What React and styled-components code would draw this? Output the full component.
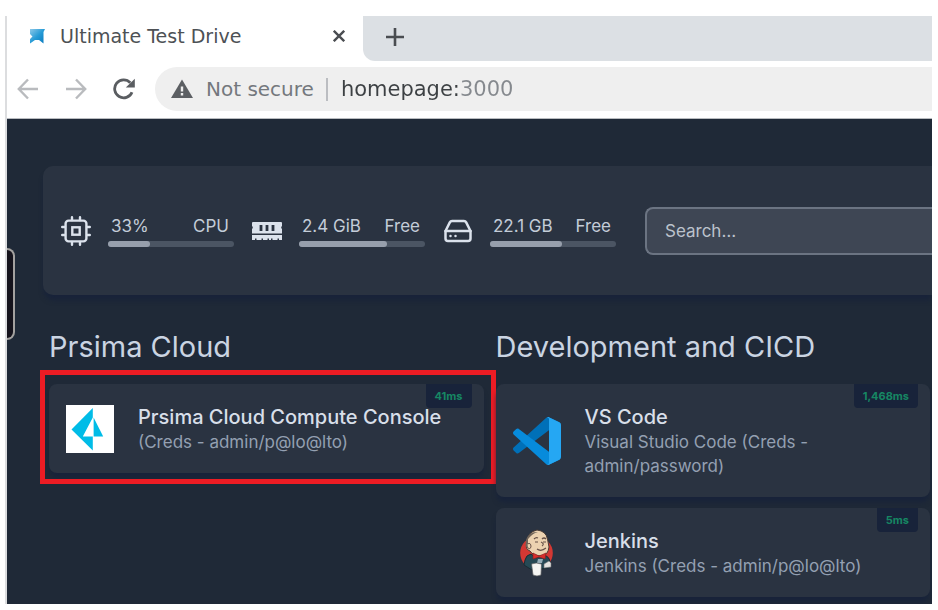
import React from "react";
import styled, { createGlobalStyle } from "styled-components";
import { FiHardDrive } from "react-icons/fi";

const GlobalStyle = createGlobalStyle`
  *, *::before, *::after { box-sizing: border-box; }
  body { margin: 0; background: #fff; }
  button, input { font: inherit; border: 0; outline: 0; padding: 0; background: none; }
  h1, h2, h3, p, ul { margin: 0; padding: 0; font-weight: inherit; font-size: inherit; }
  ul { list-style: none; }
`;

const Frame = styled.div`
  padding: 16px 6px 6px 5px;
`;

const Browser = styled.div`
  position: relative;
  overflow: hidden;
  border-left: 2px solid #dcdddf;
  font-family: "DejaVu Sans", sans-serif;
`;

const TabStrip = styled.div`
  display: flex;
  height: 45px;
  background: #fff;
`;

const Tab = styled.div`
  display: flex;
  align-items: center;
  flex: 0 0 356px;
  padding: 0 14px 6px 21px;
  color: #4d5155;
  font-size: 19px;
`;

const TabTitle = styled.span`
  flex: 1;
  margin-left: 14px;
  white-space: nowrap;
`;

const StripRest = styled.div`
  flex: 1;
  display: flex;
  padding: 0 0 4px 18px;
  background: #dce0e4;
  border-bottom-left-radius: 12px;
`;

const IconButton = styled.button`
  display: grid;
  place-items: center;
  flex: 0 0 auto;
  width: ${(p) => p.$size || 28}px;
  color: ${(p) => p.$color || "#4a4d51"};
  cursor: pointer;
`;

const Toolbar = styled.div`
  display: flex;
  align-items: center;
  height: 58px;
  padding: 0 0 1px 7px;
  border-bottom: 1px solid #b9bcc0;
`;

const NavButtons = styled.div`
  display: flex;
  gap: 20px;
  margin-right: 17px;
`;

const AddressBar = styled.div`
  flex: 1;
  min-width: 0;
  display: flex;
  align-items: center;
  height: 44px;
  padding-left: 16px;
  border-radius: 22px 0 0 22px;
  background: #efefef;
  color: #74787d;
  font-size: 20px;
`;

const Security = styled.button`
  display: flex;
  align-items: center;
  gap: 13px;
  color: inherit;
  white-space: nowrap;
`;

const Divider = styled.span`
  width: 2px;
  height: 23px;
  margin: 0 13px 0 12px;
  background: #bbbdc1;
`;

const UrlInput = styled.input`
  flex: 1;
  min-width: 0;
  height: 32px;
  font-size: 21px;
  color: transparent;
  caret-color: #3c4043;
  background: linear-gradient(90deg, #3c4043 118px, #85898e 118px);
  -webkit-background-clip: text;
  background-clip: text;
`;

const Dashboard = styled.main`
  padding: 47px 0 7px 36px;
  background: #1f2937;
  color: #cbd5e1;
  font-family: Inter, sans-serif;
`;

const SideHandle = styled.div`
  position: absolute;
  left: 0;
  top: 232px;
  width: 8px;
  height: 92px;
  border: 2px solid #a3a19f;
  border-left: 0;
  border-radius: 0 9px 9px 0;
  background: #15131c;
`;

const InfoPanel = styled.section`
  display: flex;
  align-items: center;
  height: 129px;
  padding-left: 18px;
  border-radius: 10px 0 0 10px;
  background: #2a3341;
  box-shadow: 0 6px 5px -1px #18233a;
`;

const Resource = styled.div`
  display: flex;
  align-items: center;
  flex: 0 0 173px;
  margin-right: 18px;
  gap: 17px;
  color: #dbe2ec;
`;

const Meter = styled.div`
  flex: 1;
`;

const MeterLabels = styled.div`
  display: flex;
  justify-content: space-between;
  padding: 0 5px 0 3px;
  margin-bottom: 3px;
  color: #c3ccd8;
  font-size: 17px;
  line-height: 24px;
  white-space: nowrap;
`;

const Track = styled.div`
  height: 6px;
  border-radius: 3px;
  background: #4b5563;
`;

const Fill = styled.div`
  height: 6px;
  border-radius: 3px;
  background: #979fac;
`;

const SearchInput = styled.input`
  flex: 1;
  min-width: 0;
  height: 48px;
  margin-left: 11px;
  padding-left: 18px;
  border: 2px solid #6b7482;
  border-right: 0;
  border-radius: 8px 0 0 8px;
  background: #3e4654;
  color: #d1d5db;
  font-size: 17px;
  &::placeholder { color: #bcc2cc; opacity: 1; }
`;

const Groups = styled.div`
  display: grid;
  grid-template-columns: 1fr 1fr;
  gap: 12px;
  padding: 34px 2px 0 6px;
`;

const GroupTitle = styled.h2`
  margin-bottom: 19px;
  color: #cad4e2;
  font-size: 29px;
  line-height: 36px;
  white-space: nowrap;
`;

const CardList = styled.ul`
  display: grid;
  gap: 11px;
`;

const CardItem = styled.li`
  position: relative;
`;

const Highlight = styled.div`
  position: absolute;
  inset: -14px -12px -11px -9px;
  border: 5px solid #ec1c24;
  pointer-events: none;
`;

const Card = styled.a`
  display: flex;
  align-items: center;
  gap: 24px;
  padding: 20px 16px 19px 17px;
  border-radius: 8px;
  background: #2a3341;
  box-shadow: 0 6px 5px -1px #18233a;
  color: inherit;
  text-decoration: none;
  svg { flex: 0 0 auto; }
`;

const CardTitle = styled.h3`
  color: #d8dfe9;
  font-size: 20px;
  font-weight: 500;
  line-height: 26px;
`;

const CardText = styled.p`
  color: #94a0b2;
  font-size: 17px;
  line-height: 24px;
`;

const Badge = styled.span`
  position: absolute;
  top: 0;
  right: 12px;
  padding: 0 9px;
  border-radius: 0 0 4px 4px;
  background: #18233a;
  color: #168763;
  font-size: 11px;
  font-weight: 700;
  line-height: 24px;
`;

const PageIcon = () => (
  <svg width="18" height="18" viewBox="0 0 18 18" aria-hidden="true">
    <defs>
      <linearGradient id="flag" x1="0" y1="0" x2="1" y2="1">
        <stop offset="0" stopColor="#8dc8e8" />
        <stop offset=".5" stopColor="#269bd6" />
        <stop offset="1" stopColor="#0878bd" />
      </linearGradient>
    </defs>
    <path d="M2 2H17L15.5 5V16.5L11 13L7 13L2 16.5V12L4.5 9.5L2 7Z" fill="url(#flag)" />
  </svg>
);

const Arrow = ({ back }) => (
  <svg width="22" height="22" viewBox="0 0 22 22" fill="none" stroke="currentColor" strokeWidth="2.4" aria-hidden="true">
    <path d={back ? "M21 11H2M11 1.5L1.8 11L11 20.5" : "M1 11H20M11 1.5L20.2 11L11 20.5"} />
  </svg>
);

const Reload = () => (
  <svg width="22" height="22" viewBox="0 0 22 22" aria-hidden="true">
    <path d="M19 14.2A9 9 0 1 1 17.3 4.7" fill="none" stroke="currentColor" strokeWidth="2.8" />
    <path d="M21.8 .8V9.6H12.8Z" fill="currentColor" />
  </svg>
);

const Warning = () => (
  <svg width="22" height="20" viewBox="0 0 22 20" aria-hidden="true">
    <path d="M11 0.5L22 19H0Z" fill="#5c5f63" />
    <path d="M9.8 7.5H12.2V12.5H9.8ZM9.8 14H12.2V16.5H9.8Z" fill="#efefef" />
  </svg>
);

const CpuIcon = () => (
  <svg width="30" height="30" viewBox="0 0 30 30" fill="none" stroke="currentColor" strokeWidth="2.4" strokeLinecap="round" aria-hidden="true">
    <rect x="4.6" y="4.6" width="20.8" height="20.8" rx="3" />
    <rect x="11.3" y="11.3" width="7.4" height="7.4" />
    <path d="M11 1.2V4M19 1.2V4M11 26V28.8M19 26V28.8M1.2 11H4M1.2 19H4M26 11H28.8M26 19H28.8" />
  </svg>
);

const MemoryIcon = () => (
  <svg width="30" height="30" viewBox="0 0 30 30" fill="currentColor" aria-hidden="true">
    <path fillRule="evenodd" d="M1 6H29Q30 6 30 7V10Q28.4 11.5 30 13V17.5H0V13Q1.6 11.5 0 10V7Q0 6 1 6ZM7.6 9V15H10.4V9ZM13.6 9V15H16.4V9ZM19.6 9V15H22.4V9Z" />
    <path d="M0 19H30V24H27V22.5H25.5V24H20.5V22.5H19V24H17V22.5H15.5V24H11V22.5H9.5V24H4.5V22.5H3V24H0Z" />
  </svg>
);

const DriveIcon = () => <FiHardDrive size={30} aria-hidden="true" />;

const PrismaLogo = () => (
  <svg width="48" height="48" viewBox="0 0 48 48" aria-hidden="true">
    <path d="M0 0H48V48H0Z" fill="#fff" />
    <path d="M5.5 24.5L26.8 3V12.5L16.8 31.5H26.8V45.5Z" fill="#00bce7" />
    <path d="M27.6 12.5L37.2 31.5H27.6Z" fill="#00bce7" />
  </svg>
);

const VsCodeLogo = () => (
  <svg width="48" height="48" viewBox="0 0 100 100" aria-hidden="true">
    <path fill="#0070b8" d="M96.46 10.8L75.86.88C73.47-.27 70.62.21 68.75 2.08L1.3 63.58C-.52 65.24-.51 68.09 1.3 69.75L6.81 74.75C8.3 76.1 10.53 76.2 12.13 74.99L93.36 13.37C96.09 11.3 100 13.25 100 16.67V16.43C100 14.03 98.62 11.84 96.46 10.8Z" />
    <path fill="#078bdb" d="M96.46 89.2L75.86 99.12C73.47 100.27 70.62 99.79 68.75 97.92L1.3 36.42C-.52 34.76-.51 31.91 1.3 30.25L6.81 25.25C8.3 23.9 10.53 23.8 12.13 25.01L93.36 86.63C96.09 88.7 100 86.75 100 83.33V83.57C100 85.97 98.62 88.16 96.46 89.2Z" />
    <path fill="#25a7f3" d="M75.86 99.13C73.47 100.27 70.62 99.79 68.75 97.92C71.06 100.22 75 98.59 75 95.33V4.67C75 1.41 71.06-.22 68.75 2.08C70.62.21 73.47-.27 75.86.87L96.46 10.78C98.62 11.82 100 14.01 100 16.41V83.59C100 85.99 98.62 88.18 96.46 89.22Z" />
  </svg>
);

const JenkinsLogo = () => (
  <svg width="48" height="48" viewBox="0 0 48 48" aria-hidden="true">
    <circle cx="23.5" cy="24" r="16.3" fill="#d33833" />
    <path d="M12 31Q13 26 18 25L23 29L30 26Q37 27 37 34L36 39L19 41L11 36Z" fill="#264955" stroke="#182c33" strokeWidth="1" />
    <path d="M14 12Q15 3 24 1Q33 2 34.5 10L36 18Q35 26 29 27Q20 27 17 22Q12 20 14 16Z" fill="#ecd2b0" stroke="#493b35" strokeWidth="1" />
    <path d="M15 10Q20 4 25 3Q16 2 13 11L12.5 17L15 20Z" fill="#6f6358" />
    <path d="M14.5 15Q18 13 18 18Q17 21 15 19" fill="#ecd2b0" stroke="#6b5349" strokeWidth="1" />
    <path d="M21 10Q23 8 25 9M29 10Q31 8 33 10M28 13Q32 15 29 17M24 20Q28 23 33 19M22 13H25M30 13H33" fill="none" stroke="#665047" strokeWidth="1.2" />
    <path d="M20 24L26 27L33 24L32 30L26 28L20 30Z" fill="#d82e2b" stroke="#86201e" strokeWidth=".6" />
    <path d="M25 30H30L29 34H24Z" fill="#94adb8" />
    <path d="M18.5 35Q23 33 28.5 35L28 46Q24 48 20 46Z" fill="#f5f5f3" stroke="#55585a" strokeWidth=".7" />
    <path d="M31 35L36 32L38 34V38L31 39Z" fill="#e4e4e1" stroke="#6e7375" strokeWidth=".6" />
  </svg>
);

const resources = [
  { icon: CpuIcon, value: "33%", label: "CPU", used: 33 },
  { icon: MemoryIcon, value: "2.4 GiB", label: "Free", used: 70 },
  { icon: DriveIcon, value: "22.1 GB", label: "Free", used: 57 },
];

const groups = [
  {
    title: "Prsima Cloud",
    cards: [
      { title: "Prsima Cloud Compute Console", text: "(Creds - admin/p@lo@lto)", ping: "41ms", logo: PrismaLogo, highlighted: true },
    ],
  },
  {
    title: "Development and CICD",
    cards: [
      { title: "VS Code", text: "Visual Studio Code (Creds - admin/password)", ping: "1,468ms", logo: VsCodeLogo },
      { title: "Jenkins", text: "Jenkins (Creds - admin/p@lo@lto)", ping: "5ms", logo: JenkinsLogo },
    ],
  },
];

export default function App() {
  return (
    <Frame>
      <GlobalStyle />
      <Browser>
        <TabStrip>
          <Tab>
            <PageIcon />
            <TabTitle>Ultimate Test Drive</TabTitle>
            <IconButton $size={20} aria-label="Close tab">
              <svg width="12" height="12" viewBox="0 0 12 12" stroke="currentColor" strokeWidth="2.4" aria-hidden="true">
                <path d="M.8.8L11.2 11.2M11.2.8L.8 11.2" />
              </svg>
            </IconButton>
          </Tab>
          <StripRest>
            <IconButton aria-label="New tab">
              <svg width="18" height="18" viewBox="0 0 18 18" stroke="currentColor" strokeWidth="2.6" aria-hidden="true">
                <path d="M9 0V18M0 9H18" />
              </svg>
            </IconButton>
          </StripRest>
        </TabStrip>
        <Toolbar>
          <NavButtons>
            <IconButton $color="#b9bbbe" aria-label="Back"><Arrow back /></IconButton>
            <IconButton $color="#b9bbbe" aria-label="Forward"><Arrow /></IconButton>
            <IconButton $color="#5a5d61" aria-label="Reload"><Reload /></IconButton>
          </NavButtons>
          <AddressBar>
            <Security><Warning />Not secure</Security>
            <Divider />
            <UrlInput aria-label="Address" defaultValue="homepage:3000" />
          </AddressBar>
        </Toolbar>
        <Dashboard>
          <InfoPanel>
            {resources.map(({ icon: Icon, value, label, used }, i) => (
              <Resource key={i}>
                <Icon />
                <Meter>
                  <MeterLabels><span>{value}</span><span>{label}</span></MeterLabels>
                  <Track><Fill style={{ width: `${used}%` }} /></Track>
                </Meter>
              </Resource>
            ))}
            <SearchInput type="search" aria-label="Search" placeholder="Search…" />
          </InfoPanel>
          <Groups>
            {groups.map((group) => (
              <section key={group.title}>
                <GroupTitle>{group.title}</GroupTitle>
                <CardList>
                  {group.cards.map(({ title, text, ping, logo: Logo, highlighted }) => (
                    <CardItem key={title}>
                      <Card href="#">
                        <Logo />
                        <div>
                          <CardTitle>{title}</CardTitle>
                          <CardText>{text}</CardText>
                        </div>
                      </Card>
                      <Badge>{ping}</Badge>
                      {highlighted && <Highlight />}
                    </CardItem>
                  ))}
                </CardList>
              </section>
            ))}
          </Groups>
        </Dashboard>
        <SideHandle />
      </Browser>
    </Frame>
  );
}
